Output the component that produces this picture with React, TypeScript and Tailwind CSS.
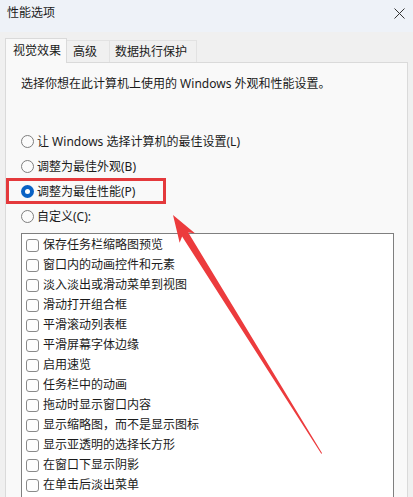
import React from "react";

const items = [
  "保存任务栏缩略图预览",
  "窗口内的动画控件和元素",
  "淡入淡出或滑动菜单到视图",
  "滑动打开组合框",
  "平滑滚动列表框",
  "平滑屏幕字体边缘",
  "启用速览",
  "任务栏中的动画",
  "拖动时显示窗口内容",
  "显示缩略图，而不是显示图标",
  "显示亚透明的选择长方形",
  "在窗口下显示阴影",
  "在单击后淡出菜单",
];

const radios = [
  { label: "让 Windows 选择计算机的最佳设置(L)", checked: false },
  { label: "调整为最佳外观(B)", checked: false },
  { label: "调整为最佳性能(P)", checked: true },
  { label: "自定义(C):", checked: false },
];

function Radio({ checked }: { checked: boolean }) {
  if (checked) {
    return (
      <span className="flex h-[13px] w-[13px] shrink-0 items-center justify-center rounded-full bg-[#0a62c4]">
        <span className="h-[5px] w-[5px] rounded-full bg-white" />
      </span>
    );
  }
  return <span className="h-[13px] w-[13px] shrink-0 rounded-full border border-[#7e7e7e] bg-[#fbfbfb]" />;
}

export default function App() {
  return (
    <div className="relative flex h-[497px] w-[413px] flex-col overflow-hidden bg-[#f0f0f0] font-['Noto_Sans','Noto_Sans_CJK_SC',sans-serif] text-[12px] leading-[16px] text-[#1b1b1b]">
      {/* title bar */}
      <div className="flex h-[32px] shrink-0 items-center justify-between bg-[#eef2f8] pl-[7px] pr-[8px]">
        <span className="-mt-[6px]">性能选项</span>
        <svg width="11" height="11" viewBox="0 0 11 11" className="-mt-[6px]">
          <path d="M0.5 0.5 L10.5 10.5 M10.5 0.5 L0.5 10.5" stroke="#333" strokeWidth="1" fill="none" />
        </svg>
      </div>

      {/* tabs */}
      <div className="relative z-10 flex h-[30px] shrink-0 items-end pl-[5px]">
        <div className="-mb-px flex h-[25px] w-[62px] items-center justify-center border border-b-0 border-[#dadada] bg-[#f9f9f9] pl-[2px]">
          视觉效果
        </div>
        <div className="flex h-[22px] w-[43px] items-center border-r border-t border-[#e2e2e2] pl-[6px]">
          高级
        </div>
        <div className="flex h-[22px] w-[87px] items-center border-r border-t border-[#e2e2e2] pl-[5px]">
          数据执行保护
        </div>
      </div>

      {/* panel */}
      <div className="ml-[5px] mr-[5px] flex flex-1 flex-col border border-b-0 border-[#dadada] bg-[#f9f9f9] pl-[15px] pt-[13px]">
        <div>选择你想在此计算机上使用的 Windows 外观和性能设置。</div>

        <div className="mt-[37px] flex flex-col">
          {radios.map((r) => (
            <div key={r.label} className="flex h-[25px] items-center gap-[3px]">
              <Radio checked={r.checked} />
              <span>{r.label}</span>
            </div>
          ))}
        </div>

        <div className="mt-[4px] w-[373px] flex-1 border border-b-0 border-[#7f7f7f] bg-white pt-[1px]">
          {items.map((t) => (
            <div key={t} className="flex h-[20px] items-center gap-[4px] pl-[4px]">
              <span className="h-[13px] w-[13px] shrink-0 rounded-[3px] border border-[#8a8a8a] bg-[#fdfdfd]" />
              <span>{t}</span>
            </div>
          ))}
        </div>
      </div>

      {/* annotation: red box */}
      <div className="absolute left-[6px] top-[178px] h-[26px] w-[160px] border-[3px] border-[#e4393c]" />

      {/* annotation: arrow */}
      <svg className="pointer-events-none absolute left-0 top-0" width="413" height="497" viewBox="0 0 413 497">
        <g transform="translate(173 215) rotate(58.05)">
          <polygon
            points="0,0 27,-9 23,-3.6 281,-0.5 281,0.5 23,3.6 27,9"
            fill="#ec3b3d"
          />
        </g>
      </svg>
    </div>
  );
}
